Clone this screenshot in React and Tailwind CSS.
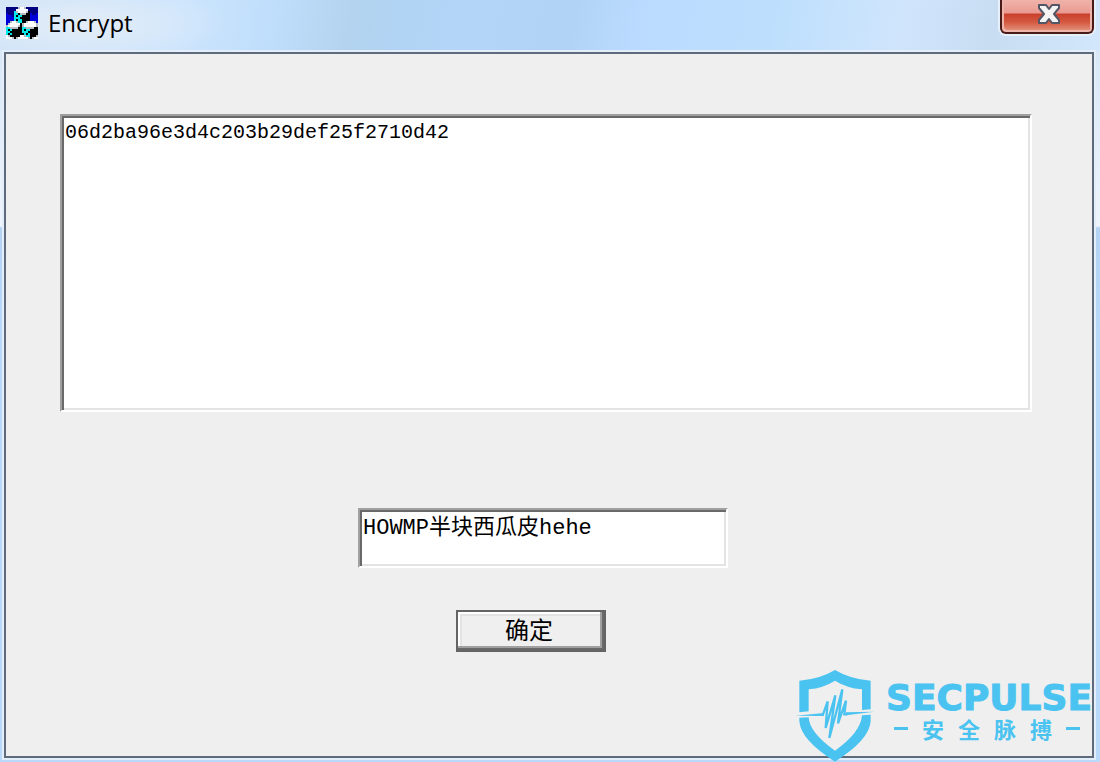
import { useState } from "react";

// one character per pixel of the 16x16 program icon
const iconRows = [
  "nnnnnngwwgnnnnnn",
  "nnnnnwwwwwwnnnnn",
  "nnnncgwwwwgknnnn",
  "bnnncckgggkkbnnb",
  "bbbnckcckkkkbbbb",
  "bbbbccckkkkkbbbb",
  "bbbbckcckkkkbbbb",
  "bbgwwgcckkgwwwgb",
  "bgwwwwwkgwwwwwwg",
  "gwwwwwgkgwwwwwwg",
  "ccggggkkccggggkk",
  "ckckkkkkckcckkkk",
  "cckkkkkkccckkkkk",
  "ckckkkkkkckckkkk",
  "wgkkkkkwwgcckkkg",
  "wwwgkgwwwwwgkgww",
];

const iconColors = {
  n: "#000080",
  b: "#0000d8",
  w: "#ffffff",
  g: "#b8bcc4",
  k: "#000000",
  c: "#00e8e8",
};

const AppIcon = () => (
  <svg
    viewBox="0 0 16 16"
    className="size-8 shrink-0"
    shapeRendering="crispEdges"
    aria-hidden="true"
  >
    {iconRows.map((row, y) =>
      row
        .split("")
        .map((c, x) => (
          <rect
            key={`${x}-${y}`}
            x={x}
            y={y}
            width="1"
            height="1"
            fill={iconColors[c]}
          />
        ))
    )}
  </svg>
);

const CloseIcon = () => (
  <svg viewBox="0 0 22 20" className="h-5 w-[22px]" aria-hidden="true">
    <path
      d="M1 1h7l3 4 3-4h7v3l-5 6 5 6v3h-7l-3-4-3 4H1v-3l5-6-5-6z"
      fill="#f4f4f4"
      stroke="#535666"
      strokeWidth="2"
      strokeLinejoin="round"
    />
  </svg>
);

const Shield = () => (
  <svg
    viewBox="0 0 270 294"
    className="h-[98px] w-[90px] shrink-0"
    fill="#4bc3f1"
    aria-hidden="true"
  >
    <path d="M22 50Q82 46 129 18Q176 46 236 50V136L210 138V76Q164 72 129 50Q94 72 50 76V142L22 145Z" />
    <path d="M22 161L50 160Q52 206 129 260Q206 206 210 154L236 152V172Q232 228 129 293Q26 228 22 172Z" />
    <path d="M10 155L96 147V156ZM247 143L162 145V154Z" />
    <path
      d="M93 151L107 112L101 192L130 94L112 222L151 76L138 178L162 110L157 151H166"
      fill="none"
      stroke="#4bc3f1"
      strokeWidth="7"
      strokeMiterlimit="3"
    />
  </svg>
);

const Watermark = () => (
  <div className="pointer-events-none absolute right-1 bottom-0 flex items-start text-[#4bc3f1]">
    <Shield />
    <div className="flex w-[214px] flex-col items-center pt-3">
      <p className="font-['DejaVu_Sans',sans-serif] text-[36px] leading-[44px] font-bold [-webkit-text-stroke:1px_#4bc3f1]">
        SECPULSE
      </p>
      <div className="flex items-center gap-[14px] pr-1 font-['Noto_Sans_CJK_SC',sans-serif] text-[22px] leading-4 font-bold">
        <span className="h-[3px] w-[14px] bg-[#4bc3f1]" />
        <span>安</span>
        <span>全</span>
        <span>脉</span>
        <span>搏</span>
        <span className="h-[3px] w-[14px] bg-[#4bc3f1]" />
      </div>
    </div>
  </div>
);

const App = () => {
  const [output, setOutput] = useState("06d2ba96e3d4c203b29def25f2710d42");
  const [value, setValue] = useState("HOWMP半块西瓜皮hehe");

  return (
    <div className="relative flex min-h-screen flex-col overflow-hidden bg-[linear-gradient(to_bottom,#d3e4f7_0px,#eef4fb_226px,#b4d3f3_228px,#b9d9fb_340px,#b9d9fb_100%)] pr-1">
      <header className="-mr-1 flex h-[50px] justify-between bg-[radial-gradient(ellipse_150px_40px_at_80px_24px,#e4edf7,transparent),linear-gradient(100deg,#cfe3f8_0%,#cde5fd_16%,#bfdefb_25%,#b3d3ee_32%,#b1d3f3_36%,#b3d5f7_42%,#b1d4f6_52%,#badbff_58%,#bddffd_70%,#d0e5fc_82%,#c8dcf2_90%,#d2e6fc_100%)]">
        <div className="flex items-center gap-[10px] pb-1 pl-[6px]">
          <AppIcon />
          <h1 className="font-['Open_Sans',sans-serif] text-[24px] leading-8 text-black">
            Encrypt
          </h1>
        </div>
        <button
          type="button"
          aria-label="Close"
          className="mr-[6px] flex h-[34px] w-[94px] justify-center rounded-b-md border-2 border-t-0 border-[#4a1a17] bg-[linear-gradient(to_bottom,#f0b3ab_0px,#ea9a90_13px,#c9402b_14px,#d4583f_22px,#e59a86_32px)] pt-1 pl-1 shadow-[0_0_0_2px_#e6f0fb,inset_2px_-2px_0_#ecb4aa,inset_-2px_0_0_#ecb4aa]"
        >
          <CloseIcon />
        </button>
      </header>

      <main className="mb-[2px] ml-[2px] flex flex-1 border-2 border-[#e3eefa]">
        <form
          onSubmit={(e) => e.preventDefault()}
          className="flex flex-1 flex-col items-center border-2 border-[#5d6b7c] bg-[#efefef] pt-[60px] pr-[60px] pl-[54px]"
        >
          <textarea
            aria-label="Output"
            value={output}
            spellCheck={false}
            onChange={(e) => setOutput(e.target.value)}
            className="block h-[298px] w-full resize-none border-2 border-t-[#a0a0a0] border-r-white border-b-white border-l-[#a0a0a0] bg-white px-[3px] py-[5px] font-['Liberation_Mono',monospace] text-[20px] leading-6 text-black shadow-[inset_2px_2px_0_#696969,inset_-2px_-2px_0_#e3e3e3] outline-none"
          />
          <div className="mt-24 w-[376px]">
            <input
              type="text"
              aria-label="Input"
              value={value}
              spellCheck={false}
              onChange={(e) => setValue(e.target.value)}
              className="block h-[60px] w-[370px] border-2 border-t-[#a0a0a0] border-r-white border-b-white border-l-[#a0a0a0] bg-white px-[3px] pb-7 font-['Liberation_Mono','Noto_Sans_CJK_SC',monospace] text-[22px] leading-7 text-black shadow-[inset_2px_2px_0_#696969,inset_-2px_-2px_0_#e3e3e3] outline-none"
            />
            <button
              type="submit"
              className="mt-[42px] ml-[98px] block h-[42px] w-[150px] border-2 border-[#646464] bg-[#efefef] pr-1 pb-1 font-['Noto_Sans_CJK_SC',sans-serif] text-[24px] leading-8 text-black shadow-[inset_-2px_-2px_0_#696969,inset_-4px_-4px_0_#a0a0a0,inset_2px_2px_0_#ffffff,inset_4px_4px_0_#e3e3e3]"
            >
              确定
            </button>
          </div>
        </form>
      </main>

      <Watermark />
    </div>
  );
};

export default App;
